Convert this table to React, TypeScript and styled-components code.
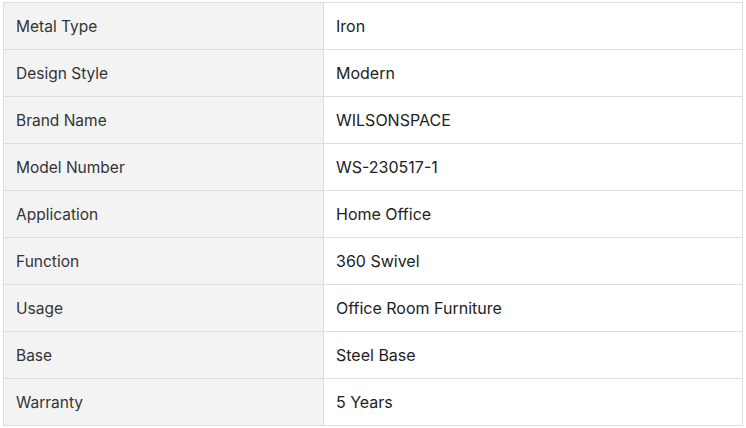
import React from "react";
import styled, { createGlobalStyle } from "styled-components";

const Global = createGlobalStyle`
  html, body { margin: 0; padding: 0; background: #fff; }
  body { font-family: Inter, "Noto Sans", sans-serif; }
`;

const Wrap = styled.div`
  padding: 2px 3px;
`;

const Table = styled.table`
  width: 740px;
  border-collapse: collapse;
  table-layout: fixed;
  border: 1px solid #dddddd;
`;

const LabelCell = styled.td`
  width: 320px;
  box-sizing: border-box;
  height: 46px;
  padding: 0 12px;
  background: #f3f3f3;
  border: 1px solid #dddddd;
  color: #333333;
  font-size: 15.5px;
  vertical-align: middle;
`;

const ValueCell = styled.td`
  height: 46px;
  padding: 0 12px;
  background: #ffffff;
  border: 1px solid #dddddd;
  color: #222222;
  font-size: 16px;
  vertical-align: middle;
`;

const rows: [string, string][] = [
  ["Metal Type", "Iron"],
  ["Design Style", "Modern"],
  ["Brand Name", "WILSONSPACE"],
  ["Model Number", "WS-230517-1"],
  ["Application", "Home Office"],
  ["Function", "360 Swivel"],
  ["Usage", "Office Room Furniture"],
  ["Base", "Steel Base"],
  ["Warranty", "5 Years"],
];

export default function App() {
  return (
    <Wrap>
      <Global />
      <Table>
        <tbody>
          {rows.map(([k, v]) => (
            <tr key={k}>
              <LabelCell>{k}</LabelCell>
              <ValueCell>{v}</ValueCell>
            </tr>
          ))}
        </tbody>
      </Table>
    </Wrap>
  );
}
